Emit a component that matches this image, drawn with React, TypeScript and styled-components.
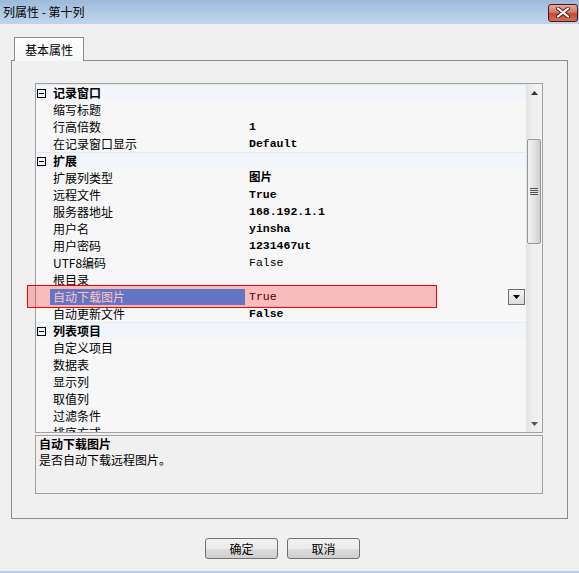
import React from "react";
import styled, { createGlobalStyle } from "styled-components";

const GlobalStyle = createGlobalStyle`
  html, body {
    margin: 0;
    padding: 0;
    background: #f0f0f0;
  }
  * {
    box-sizing: border-box;
  }
`;

const CJK = `"Noto Sans CJK SC", "Liberation Sans", sans-serif`;
const MONO = `"Liberation Mono", "Noto Sans CJK SC", monospace`;

const Window = styled.div`
  width: 579px;
  height: 573px;
  background: #f0f0f0;
  display: flex;
  flex-direction: column;
  border-bottom: 2px solid #b9d1ea;
  font-family: ${CJK};
  font-size: 12px;
  color: #000;
  overflow: hidden;
`;

const TitleBar = styled.div`
  height: 24px;
  flex: none;
  display: flex;
  align-items: center;
  justify-content: space-between;
  padding: 0 1px 0 3px;
  background: linear-gradient(#9db9d9, #b4cce6 60%, #bed5ed);
`;

const Title = styled.span`
  font-size: 12px;
  line-height: 16px;
`;

const CloseButton = styled.div`
  width: 30px;
  height: 18px;
  margin-top: 1px;
  border: 1px solid #4a1616;
  border-radius: 3px;
  background: linear-gradient(#e8a999, #d67a68 45%, #c24a36 55%, #d0705a);
  display: flex;
  align-items: center;
  justify-content: center;
`;

const Body = styled.div`
  flex: 1;
  display: flex;
  flex-direction: column;
  padding: 13px 11px 0 11px;
`;

const TabStrip = styled.div`
  display: flex;
  padding-left: 3px;
`;

const Tab = styled.div`
  width: 70px;
  height: 24px;
  margin-bottom: -1px;
  position: relative;
  z-index: 1;
  border: 1px solid #898c95;
  border-bottom: none;
  background: linear-gradient(#ffffff, #f7f7f7);
  display: flex;
  align-items: center;
  justify-content: center;
  font-size: 12px;
`;

const Panel = styled.div`
  position: relative;
  height: 459px;
  border: 1px solid #898c95;
  padding: 22px 24px 0 23px;
  display: flex;
  flex-direction: column;
`;

const Grid = styled.div`
  height: 350px;
  border: 1px solid #a0a0a0;
  background: #f7f7f7;
  display: flex;
  overflow: hidden;
`;

const Rows = styled.div`
  flex: 1;
  display: flex;
  flex-direction: column;
  overflow: hidden;
`;

const Row = styled.div<{ $category?: boolean }>`
  flex: none;
  height: 17px;
  display: grid;
  grid-template-columns: 14px 195px 1fr;
  align-items: center;
  background: ${p => (p.$category ? "#f2f5fa" : "transparent")};
  border-top: 1px solid ${p => (p.$category ? "#e6e9ef" : "transparent")};
`;

const Margin = styled.div`
  display: flex;
  align-items: center;
  padding-left: 1px;
`;

const CategoryLabel = styled.div`
  grid-column: 2 / 4;
  padding-left: 3px;
  font-weight: bold;
  line-height: 16px;
  white-space: nowrap;
`;

const Name = styled.div<{ $selected?: boolean }>`
  height: 16px;
  padding-left: 3px;
  line-height: 16px;
  white-space: nowrap;
  overflow: hidden;
  background: ${p => (p.$selected ? "#3399ff" : "transparent")};
  color: ${p => (p.$selected ? "#fff" : "#000")};
`;

const Value = styled.div<{ $bold?: boolean }>`
  display: flex;
  align-items: center;
  justify-content: space-between;
  padding-left: 4px;
  padding-right: 1px;
  font-family: ${MONO};
  font-size: 11.5px;
  font-weight: ${p => (p.$bold ? "bold" : "normal")};
  line-height: 16px;
  white-space: nowrap;
`;

const DropButton = styled.div`
  width: 17px;
  height: 16px;
  border: 1px solid #6d6d6d;
  background: linear-gradient(#f4f4f4, #dcdcdc);
  display: flex;
  align-items: center;
  justify-content: center;
`;

const ScrollBar = styled.div`
  width: 16px;
  flex: none;
  display: flex;
  flex-direction: column;
  align-items: center;
  background: linear-gradient(90deg, #e2e2e2, #eeeeee 40%, #f2f2f2);
`;

const ScrollArrow = styled.div`
  height: 17px;
  flex: none;
  display: flex;
  align-items: center;
  justify-content: center;
`;

const Thumb = styled.div`
  width: 14px;
  height: 105px;
  margin-top: 38px;
  border: 1px solid #979797;
  border-radius: 2px;
  background: linear-gradient(90deg, #f2f2f2, #e4e4e4 50%, #cfcfcf);
  display: flex;
  align-items: center;
  justify-content: center;
`;

const Spacer = styled.div`
  flex: 1;
`;

const Description = styled.div`
  margin-top: 2px;
  height: 59px;
  border: 1px solid #a0a0a0;
  padding: 0 3px;
  line-height: 16px;
`;

const DescTitle = styled.div`
  font-weight: bold;
`;

const Highlight = styled.div`
  position: absolute;
  left: 15px;
  top: 224px;
  width: 410px;
  height: 23px;
  border: 1px solid #ff0000;
  background: rgba(255, 0, 0, 0.24);
  pointer-events: none;
`;

const ButtonBar = styled.div`
  display: flex;
  gap: 9px;
  margin-top: 19px;
  padding-left: 194px;
`;

const Button = styled.div`
  width: 73px;
  height: 21px;
  border: 1px solid #707070;
  border-radius: 3px;
  background: linear-gradient(#f2f2f2, #ebebeb 50%, #dddddd 51%, #cfcfcf);
  display: flex;
  align-items: center;
  justify-content: center;
  font-size: 12px;
`;

const Minus = () => (
  <svg width="9" height="9" viewBox="0 0 9 9">
    <rect x="0.5" y="0.5" width="8" height="8" fill="none" stroke="#000" />
    <line x1="2" y1="4.5" x2="7" y2="4.5" stroke="#000" />
  </svg>
);

const Triangle = ({ up, color = "#000" }: { up?: boolean; color?: string }) => (
  <svg width="7" height="4" viewBox="0 0 7 4">
    <polygon points={up ? "3.5,0 7,4 0,4" : "0,0 7,0 3.5,4"} fill={color} />
  </svg>
);

const CloseGlyph = () => (
  <svg width="14" height="11" viewBox="0 0 14 11">
    <path d="M2 1.5 L12 9.5 M12 1.5 L2 9.5" stroke="#4a2020" strokeWidth="4" strokeLinecap="round" />
    <path d="M2 1.5 L12 9.5 M12 1.5 L2 9.5" stroke="#fff" strokeWidth="2.2" strokeLinecap="round" />
  </svg>
);

const Grip = () => (
  <svg width="8" height="8" viewBox="0 0 8 8">
    {[0, 2, 4, 6].map(y => (
      <line key={y} x1="0" y1={y + 0.5} x2="8" y2={y + 0.5} stroke="#555" />
    ))}
  </svg>
);

type Item =
  | { kind: "cat"; label: string }
  | { kind: "prop"; name: string; value?: string; bold?: boolean; selected?: boolean };

const items: Item[] = [
  { kind: "cat", label: "记录窗口" },
  { kind: "prop", name: "缩写标题" },
  { kind: "prop", name: "行高倍数", value: "1", bold: true },
  { kind: "prop", name: "在记录窗口显示", value: "Default", bold: true },
  { kind: "cat", label: "扩展" },
  { kind: "prop", name: "扩展列类型", value: "图片", bold: true },
  { kind: "prop", name: "远程文件", value: "True", bold: true },
  { kind: "prop", name: "服务器地址", value: "168.192.1.1", bold: true },
  { kind: "prop", name: "用户名", value: "yinsha", bold: true },
  { kind: "prop", name: "用户密码", value: "1231467ut", bold: true },
  { kind: "prop", name: "UTF8编码", value: "False" },
  { kind: "prop", name: "根目录" },
  { kind: "prop", name: "自动下载图片", value: "True", selected: true },
  { kind: "prop", name: "自动更新文件", value: "False", bold: true },
  { kind: "cat", label: "列表项目" },
  { kind: "prop", name: "自定义项目" },
  { kind: "prop", name: "数据表" },
  { kind: "prop", name: "显示列" },
  { kind: "prop", name: "取值列" },
  { kind: "prop", name: "过滤条件" },
  { kind: "prop", name: "排序方式" },
];

export default function App() {
  return (
    <>
      <GlobalStyle />
      <Window>
        <TitleBar>
          <Title>列属性 - 第十列</Title>
          <CloseButton>
            <CloseGlyph />
          </CloseButton>
        </TitleBar>
        <Body>
          <TabStrip>
            <Tab>基本属性</Tab>
          </TabStrip>
          <Panel>
            <Grid>
              <Rows>
                {items.map((item, idx) =>
                  item.kind === "cat" ? (
                    <Row key={idx} $category>
                      <Margin>
                        <Minus />
                      </Margin>
                      <CategoryLabel>{item.label}</CategoryLabel>
                    </Row>
                  ) : (
                    <Row key={idx}>
                      <Margin />
                      <Name $selected={item.selected}>{item.name}</Name>
                      <Value $bold={item.bold}>
                        <span>{item.value}</span>
                        {item.selected && (
                          <DropButton>
                            <Triangle />
                          </DropButton>
                        )}
                      </Value>
                    </Row>
                  )
                )}
              </Rows>
              <ScrollBar>
                <ScrollArrow>
                  <Triangle up color="#333" />
                </ScrollArrow>
                <Thumb>
                  <Grip />
                </Thumb>
                <Spacer />
                <ScrollArrow>
                  <Triangle color="#555" />
                </ScrollArrow>
              </ScrollBar>
            </Grid>
            <Description>
              <DescTitle>自动下载图片</DescTitle>
              <div>是否自动下载远程图片。</div>
            </Description>
            <Highlight />
          </Panel>
          <ButtonBar>
            <Button>确定</Button>
            <Button>取消</Button>
          </ButtonBar>
        </Body>
      </Window>
    </>
  );
}
